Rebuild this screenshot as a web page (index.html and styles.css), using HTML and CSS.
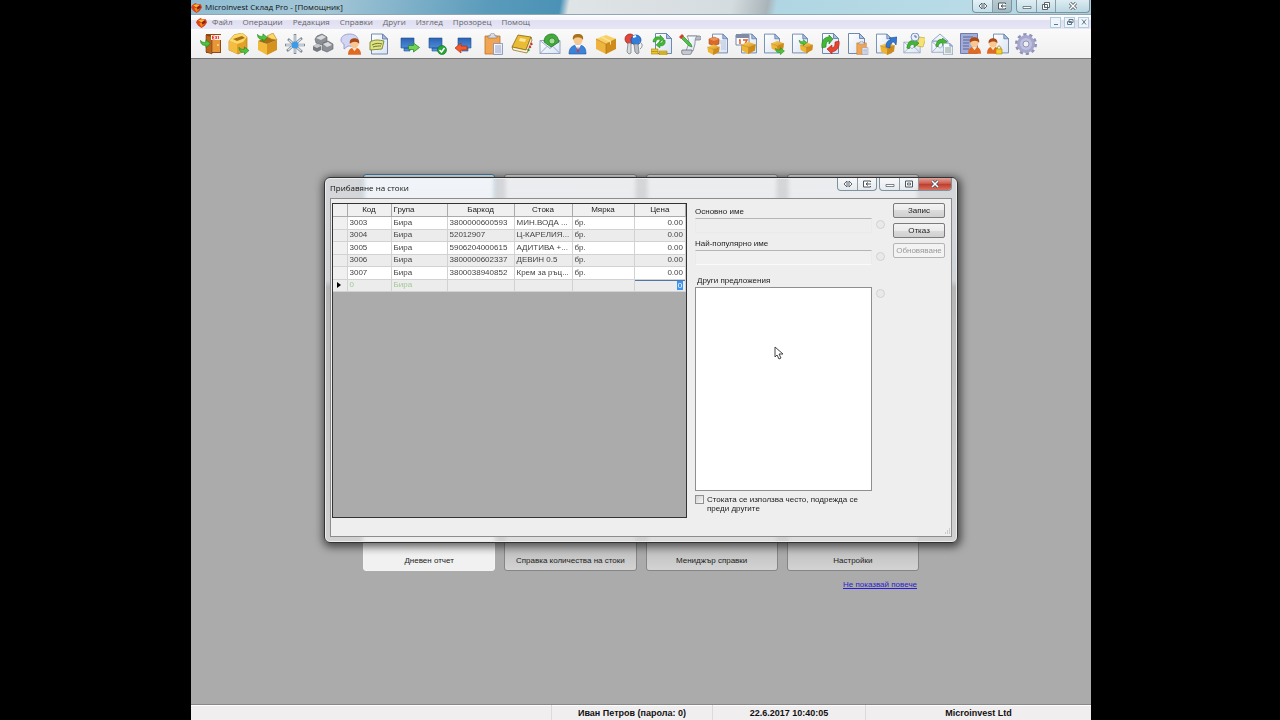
FILE: index.html
```
<!DOCTYPE html>
<html lang="bg">
<head>
    <meta charset="UTF-8">
    <meta name="viewport" content="width=device-width, initial-scale=1.0">
    <title>Microinvest Склад Pro - [Помощник]</title>
    <link rel="stylesheet" href="styles.css">
</head>
<body>

<!-- shared icon parts -->
<svg class="defs" aria-hidden="true">
    <defs>
        <linearGradient id="gold" x1="0" y1="0" x2="1" y2="1">
            <stop offset="0" stop-color="#fbd45f"/>
            <stop offset="1" stop-color="#d8961f"/>
        </linearGradient>
        <linearGradient id="paper" x1="0" y1="0" x2="1" y2="1">
            <stop offset="0" stop-color="#ffffff"/>
            <stop offset="1" stop-color="#d9e3f3"/>
        </linearGradient>
        <linearGradient id="screenBlue" x1="0" y1="0" x2="0" y2="1">
            <stop offset="0" stop-color="#2c62b4"/>
            <stop offset="1" stop-color="#5597e0"/>
        </linearGradient>
    </defs>
    <symbol id="logo" viewBox="0 0 10 10">
        <path d="M1 3l3-2 2 1 3 0 1 3-2 3-3 2-3-2-2-3z" fill="#d8431c"/>
        <path d="M2 3l3-1 3 1-3 2z" fill="#f9b52c"/>
        <path d="M3 6l2-1 3 1-3 3z" fill="#f08a1e"/>
        <path d="M5 5l3-2 1 2-3 2z" fill="#8e2410"/>
    </symbol>
    <symbol id="box" viewBox="0 0 20 18">
        <path d="M0 5l10 4v9L1 13z" fill="#f0b433"/>
        <path d="M10 9l10-4-1 8-9 5z" fill="#cf8b16"/>
        <path d="M0 5l10-4 10 4-10 4z" fill="url(#gold)"/>
        <path d="M0 5l10 4 10-4M10 9v9" fill="none" stroke="#a86d10" stroke-width=".6"/>
    </symbol>
    <symbol id="doc" viewBox="0 0 17 21">
        <path d="M.5.5h11l5 5v15H.5z" fill="url(#paper)" stroke="#7089ae"/>
        <path d="M11.500.5v5h5z" fill="#a9bfe0" stroke="#5b77a6" stroke-width=".8"/>
    </symbol>
    <symbol id="arrowRight" viewBox="0 0 12 10">
        <path d="M.5 3h5V.5L11.500 5 5.500 9.500V7h-5z" fill="#6fd457" stroke="#2d8a28" stroke-width=".8"/>
    </symbol>
    <symbol id="arrowCurve" viewBox="0 0 12 10">
        <path d="M.5 1.500C2 4 4 4 6.500 3.500V1l5 4-5 4.500V7C3 7.500.5 6 .5 1.500z" fill="#4cc43b" stroke="#238020" stroke-width=".7"/>
    </symbol>
    <symbol id="person" viewBox="0 0 14 18">
        <path d="M0 18c0-6 3-8 7-8s7 2 7 8z" fill="#e06a22"/>
        <path d="M4 10l3 4 3-4z" fill="#fbe3c2"/>
        <circle cx="7" cy="6" r="4.500" fill="#f7c893"/>
        <path d="M2 6C1 1 5 0 7 0s6 1 5 6C10 3 5 3 2 6z" fill="#a94a17"/>
    </symbol>
    <symbol id="mail" viewBox="0 0 22 15">
        <path d="M1 1l20 0v13H1z" fill="url(#paper)" stroke="#7f93b8" stroke-width=".8"/>
        <path d="M1 1l10 8 10-8M1 14l7-7M21 14l-7-7" fill="none" stroke="#8ea0c6" stroke-width=".9"/>
    </symbol>
    <symbol id="greenTurn" viewBox="0 0 16 12">
        <path d="M1 11C2 4 5 1 10 2l0-2 6 5-6 5V7C7 6 5 7 4 12z" fill="#44b534" stroke="#1f7c1c" stroke-width=".7"/>
    </symbol>
    <symbol id="clip" viewBox="0 0 20 22">
        <path d="M1 3h15v18H1z" fill="#f1a451" stroke="#be7427" stroke-width=".8"/>
        <path d="M4 5V3h2c0-4 5-4 5 0h2v2z" fill="#d9dce2" stroke="#777" stroke-width=".6"/>
        <path d="M9.500 10.500h9v11h-9z" fill="url(#paper)" stroke="#7d8bb0" stroke-width=".8"/>
        <path d="M11 13h6M11 15h6M11 17h6M11 19h6" stroke="#98a6cc"/>
    </symbol>
    <symbol id="dualArrow" viewBox="0 0 10 8">
        <path d="M4 1L1 4l3 3zM6 1l3 3-3 3z" fill="#fff" stroke="#4b555e" stroke-width=".9"/>
    </symbol>
    <symbol id="dock" viewBox="0 0 10 8">
        <path d="M8.500 2V1h-7v6h7V6" fill="#fff" stroke="#4b555e"/>
        <path d="M9 4H4M6 2.500L4 4l2 1.500" fill="none" stroke="#4b555e"/>
    </symbol>
    <symbol id="minimize" viewBox="0 0 10 8">
        <path d="M1 4.500h8v2H1z" fill="#fff" stroke="#5b6670" stroke-width=".8"/>
    </symbol>
    <symbol id="maximize" viewBox="0 0 10 8">
        <path d="M1.500 1h7v6h-7z" fill="#fff" stroke="#4b555e"/>
        <path d="M3.500 3h3v2h-3z" fill="#dde" stroke="#4b555e" stroke-width=".8"/>
    </symbol>
    <symbol id="restore" viewBox="0 0 10 8">
        <path d="M3.500.5h5v5h-5zM1.500 2.500h5v5h-5z" fill="#fff" stroke="#4b555e" stroke-width=".9"/>
        <path d="M3.500 4.500h1v1h-1z" fill="#4b555e"/>
    </symbol>
    <symbol id="close" viewBox="0 0 10 8">
        <path d="M2 1l6 6M8 1L2 7" stroke="#4b555e" stroke-width="3"/>
        <path d="M2 1l6 6M8 1L2 7" stroke="#fff" stroke-width="1.500"/>
    </symbol>
</svg>

<div class="app">
    <header class="titlebar">
        <svg class="logo"><use href="#logo"/></svg>
        <h1>Microinvest Склад Pro - [Помощник]</h1>
        <div class="window-buttons">
            <button aria-label="Преместване"><svg><use href="#dualArrow"/></svg></button>
            <button class="shade" aria-label="Закачане"><svg><use href="#dock"/></svg></button>
        </div>
        <div class="window-buttons">
            <button aria-label="Минимизиране"><svg><use href="#minimize"/></svg></button>
            <button aria-label="Възстановяване"><svg><use href="#restore"/></svg></button>
            <button class="wide" aria-label="Затваряне"><svg><use href="#close"/></svg></button>
        </div>
    </header>

    <nav class="menubar">
        <svg class="logo"><use href="#logo"/></svg>
        <button>Файл</button>
        <button>Операции</button>
        <button>Редакция</button>
        <button>Справки</button>
        <button>Други</button>
        <button>Изглед</button>
        <button>Прозорец</button>
        <button>Помощ</button>
        <div class="mdi-buttons">
            <button aria-label="Минимизиране"><svg viewBox="0 0 8 8"><path d="M2 6.500h4"/></svg></button>
            <button aria-label="Възстановяване"><svg viewBox="0 0 8 8"><path d="M3 1.500h4v3H3zM1.500 3.500h4v3h-4z"/></svg></button>
            <button aria-label="Затваряне"><svg viewBox="0 0 8 8"><path d="M2 1.500l4 5M6 1.500l-4 5"/></svg></button>
        </div>
    </nav>

    <div class="toolbar">
        <button aria-label="Изход"><svg viewBox="0 0 22 22">
            <path d="M6 1h15v19H6z" fill="#8c4a12"/>
            <path d="M7 3h13v16H7z" fill="#e8963a"/>
            <path d="M6 2l6 2v17l-6-2z" fill="#b9661c" stroke="#7b3e0d" stroke-width=".6"/>
            <path d="M11 2h10v5H11z" fill="#fff1e6"/>
            <path d="M12.500 3v3M12.500 3h2M12.500 4.500h1.500M12.500 6h2M15.500 3l1.500 3M17 3l-1.500 3M18.500 3v3" stroke="#d22" stroke-width=".8"/>
            <circle cx="18" cy="12" r="1" fill="#fbe08a"/>
            <use href="#arrowCurve" x="0" y="6" width="11" height="9"/>
        </svg></button>
        <button aria-label="Продажба"><svg viewBox="0 0 22 22">
            <path d="M1 8l5-6 8-2 5 4v13l-9 4-9-4z" fill="#e3a127" stroke="#a9700f" stroke-width=".6"/>
            <path d="M1 8l5-6 8-2 5 4-4 5-6 2z" fill="#fbd869"/>
            <path d="M5 6l9-3 3 2-8 3z" fill="#a86f11"/>
            <path d="M1 8l8 3v10l-8-4z" fill="#f5bd40"/>
            <use href="#arrowCurve" x="10" y="13" width="12" height="9"/>
        </svg></button>
        <button aria-label="Доставка"><svg viewBox="0 0 22 22">
            <path d="M2 8l9 3v11l-9-5z" fill="#f3b93b"/>
            <path d="M11 11l10-4v10l-10 5z" fill="#d5931e"/>
            <path d="M2 8l9-4 10 3-10 4z" fill="#a86f11"/>
            <path d="M11 3l6-3 4 7-6-1z" fill="#fbd869" stroke="#b57a14" stroke-width=".6"/>
            <use href="#arrowCurve" x="0" y="0" width="13" height="9"/>
        </svg></button>
        <button aria-label="Прехвърляне"><svg viewBox="0 0 22 22">
            <path d="M11 1v20M1 12h20M3 18L18 5M4 6l14 13" stroke="#7e8791" stroke-width="2.500"/>
            <path d="M11 2v18M2 12h18M4 17L17 6M5 7l12 11" stroke="#d9e0e7" stroke-width="1.300"/>
            <circle cx="11" cy="12" r="3.500" fill="#3b9be8"/>
        </svg></button>
        <button aria-label="Производство"><svg viewBox="0 0 22 22">
            <path d="M3 6l2-3 5-2 5 3v5l-5 3-6-2z" fill="#8c9096" stroke="#5b5f65" stroke-width=".6"/>
            <path d="M4 5l6-3 4 2-5 3z" fill="#d8dadd"/>
            <path d="M10 14l1-4 5-2 5 3v5l-6 3-5-2z" fill="#8c9096" stroke="#5b5f65" stroke-width=".6"/>
            <path d="M11 11l5-2 4 3-5 2z" fill="#d8dadd"/>
            <path d="M1 13l4-2 4 2v4l-4 2-4-2z" fill="#777b81"/>
            <path d="M1 13l4-2 4 2-4 2z" fill="#c8cacd"/>
        </svg></button>
        <button aria-label="Чат"><svg viewBox="0 0 22 22">
            <path d="M1 7c0-8 17-8 17 0s-7 6-10 6l-4 3V11C2 10 1 9 1 7z" fill="#d2d6f2" stroke="#8c93c9" stroke-width=".8"/>
            <use href="#person" x="8" y="5" width="13" height="17"/>
        </svg></button>
        <button aria-label="Бележка"><svg viewBox="0 0 22 22">
            <use href="#doc" x="3" y="0" width="17" height="22"/>
            <path d="M2 9c5-3 9-2 14-1l-2 8-12 1z" fill="#dfe384" stroke="#79832b" stroke-width=".9"/>
            <path d="M4 12c4-2 7-2 10-1M5 14c3-1 6-1 8-1" fill="none" stroke="#6d7630"/>
        </svg></button>
        <span class="separator"></span>
        <button aria-label="Напред"><svg viewBox="0 0 22 22">
            <path d="M2 5h13v10H2zM5 15h6v3H5z" fill="url(#screenBlue)" stroke="#204d92" stroke-width=".6"/>
            <use href="#arrowRight" x="9" y="9" width="12" height="11"/>
        </svg></button>
        <button aria-label="Потвърди"><svg viewBox="0 0 22 22">
            <path d="M2 5h13v10H2zM5 15h6v3H5z" fill="url(#screenBlue)" stroke="#204d92" stroke-width=".6"/>
            <circle cx="15" cy="17" r="4.500" fill="#27a53a" stroke="#0b6d1c" stroke-width=".6"/>
            <path d="M12.500 17l2 2 3-4" fill="none" stroke="#fff" stroke-width="1.500"/>
        </svg></button>
        <button aria-label="Назад"><svg viewBox="0 0 22 22">
            <path d="M3 5h13v10H3zM7 15h6v3H7z" fill="url(#screenBlue)" stroke="#204d92" stroke-width=".6"/>
            <path d="M0 15l6-5v3h6v4H6v3z" fill="#f05b30" stroke="#ad2f10" stroke-width=".7"/>
        </svg></button>
        <button aria-label="Постави"><svg viewBox="0 0 22 22">
            <use href="#clip" x="1" y="0" width="20" height="22"/>
        </svg></button>
        <button aria-label="Книга"><svg viewBox="0 0 22 22">
            <path d="M1 14L7 2l13 2-5 13z" fill="#eabc35" stroke="#8a6410" stroke-width=".8"/>
            <path d="M1 14l14 3 5-13 1 3-5 13L2 17z" fill="#faf3d8" stroke="#8a6410" stroke-width=".7"/>
            <path d="M9 5l6 1-1 3-6-1z" fill="#fbe79d"/>
            <path d="M20 10l1 2M18.500 13l1 2" stroke="#c33" stroke-width="2"/>
            <path d="M17 16l1 2" stroke="#2a9b35" stroke-width="2"/>
        </svg></button>
        <button aria-label="Плащане"><svg viewBox="0 0 22 22">
            <use href="#mail" x="0" y="6" width="22" height="16"/>
            <path d="M5 9c0-6 4-8 8-8s6 3 7 8l-8 5z" fill="#43ab3c" stroke="#1d6f20" stroke-width=".7"/>
            <circle cx="13" cy="8" r="3" fill="#a3dc93" stroke="#1d6f20" stroke-width=".6"/>
        </svg></button>
        <button aria-label="Партньор"><svg viewBox="0 0 22 22">
            <path d="M2 21c0-6 3-9 9-9s8 3 8 9z" fill="#3b83d8" stroke="#1e56a2" stroke-width=".6"/>
            <path d="M8 12l3 5 3-5z" fill="#fff"/>
            <path d="M11 13l1 5-1 2-1-2z" fill="#d33"/>
            <circle cx="11" cy="7" r="4.500" fill="#f7c88f"/>
            <path d="M6 7C5 2 8 1 11 1s6 1 5 6c-2-3-7-4-10 0z" fill="#a8721d"/>
        </svg></button>
        <button aria-label="Стока"><svg viewBox="0 0 22 22">
            <path d="M1 6l10 5v10L1 16z" fill="#eeb43d"/>
            <path d="M11 11l10-5v10l-10 5z" fill="#cf8c1b"/>
            <path d="M1 6l10-4 10 4-10 5z" fill="#f9cf62"/>
            <path d="M1 6l10 5 10-5M11 11v10" fill="none" stroke="#a86d10" stroke-width=".6"/>
            <path d="M5 4l10 5v3l1-1V8L7 3z" fill="#fbe09a"/>
        </svg></button>
        <button aria-label="Потребители"><svg viewBox="0 0 22 22">
            <circle cx="7" cy="6" r="5" fill="#e2463a" stroke="#9b1f18" stroke-width=".7"/>
            <circle cx="13" cy="7" r="5" fill="#2f7ddd" stroke="#194e98" stroke-width=".7"/>
            <path d="M10 4l3-1" stroke="#fff" stroke-width="2"/>
            <path d="M5 10l3 0 0 10-2 1-2-2z" fill="#d8dce0" stroke="#6c7278" stroke-width=".7"/>
            <path d="M11 11h4l1 9-2 1-2-2z" fill="#b9bfc5" stroke="#6c7278" stroke-width=".7"/>
            <path d="M16 9c4 1 4 5 1 7" fill="none" stroke="#8b8f94"/>
        </svg></button>
        <button aria-label="Валути"><svg viewBox="0 0 22 22">
            <use href="#doc" x="4" y="0" width="17" height="21"/>
            <path d="M2 9c0-4 3-6 7-5V2l4 4-4 3V7C7 6 5 7 5 9zM14 7c1 4-1 6-5 6v2l-4-3 4-4v2c2 0 3-1 3-3z" fill="#42b836" stroke="#1f7c1c" stroke-width=".4"/>
            <path d="M0 16h7v5H0zM8 18h8v4H8z" fill="#ecc52e" stroke="#a27f12" stroke-width=".6"/>
            <path d="M0 18.500h7M8 20h8" stroke="#a27f12" stroke-width=".6"/>
        </svg></button>
        <button aria-label="Редактиране"><svg viewBox="0 0 22 22">
            <path d="M9 3h11c3 0 3 4 0 4h-4z" fill="#b7bbc6" stroke="#7d828c" stroke-width=".8"/>
            <path d="M8 3h10c-2 2-2 5-2 8l-2 7H7l3-8C10 7 9 5 8 3z" fill="url(#paper)" stroke="#7d828c" stroke-width=".8"/>
            <path d="M3 17h10c0 4-2 5-4 5H5c-2 0-3-3-2-5z" fill="#c5c9d3" stroke="#6a707b" stroke-width=".8"/>
            <path d="M3 2l9 9 1 3-3-1L1 4z" fill="#53c04a" stroke="#237c25" stroke-width=".6"/>
            <path d="M3 1l2 2-3 3-2-2z" fill="#dd3b31"/>
        </svg></button>
        <button aria-label="Справка стоки"><svg viewBox="0 0 22 22">
            <use href="#doc" x="5" y="0" width="16" height="21"/>
            <path d="M12 8h7M13 10h6M14 12h5M14 14h5M14 16h5" stroke="#b4c1d8"/>
            <path d="M2 6l5-2 5 2v5l-5 2-5-2z" fill="#d9692c" stroke="#9c4215" stroke-width=".5"/>
            <path d="M2 6l5-2 5 2-5 2z" fill="#ee9351"/>
            <use href="#box" x="0" y="11" width="13" height="11"/>
        </svg></button>
        <button aria-label="Календар"><svg viewBox="0 0 22 22">
            <use href="#doc" x="6" y="0" width="16" height="21"/>
            <path d="M1 2h13v10H1z" fill="#fff" stroke="#7387ab"/>
            <path d="M1 1h13v4H1z" fill="#7f8ca5"/>
            <path d="M4 7h1v4M8 7h4l-2 4" fill="none" stroke="#df592b" stroke-width="1.500"/>
            <use href="#box" x="6" y="8" width="15" height="13"/>
        </svg></button>
        <button aria-label="Изписване"><svg viewBox="0 0 22 22">
            <use href="#doc" x="1" y="0" width="16" height="21"/>
            <use href="#box" x="8" y="7" width="13" height="12"/>
            <use href="#arrowCurve" x="12" y="14" width="10" height="8"/>
        </svg></button>
        <button aria-label="Приемане"><svg viewBox="0 0 22 22">
            <use href="#doc" x="1" y="0" width="16" height="21"/>
            <use href="#box" x="9" y="8" width="13" height="13"/>
            <use href="#arrowCurve" x="7" y="6" width="10" height="7"/>
        </svg></button>
        <button aria-label="Обмяна"><svg viewBox="0 0 22 22">
            <use href="#doc" x="3" y="0" width="17" height="21"/>
            <path d="M3 15C2 8 5 4 10 4V2l4 4-4 5V8c-2 0-3 2-3 6z" fill="#42b836" stroke="#1f7c1c" stroke-width=".6"/>
            <path d="M20 8c1 6-2 10-7 11v2l-5-5 5-4v3c3-1 3-3 3-6z" fill="#e8432f" stroke="#a5200f" stroke-width=".6"/>
        </svg></button>
        <button aria-label="Копиране"><svg viewBox="0 0 22 22">
            <use href="#doc" x="1" y="0" width="17" height="21"/>
            <use href="#clip" x="9" y="8" width="13" height="14"/>
        </svg></button>
        <button aria-label="Експорт"><svg viewBox="0 0 22 22">
            <use href="#doc" x="1" y="0" width="16" height="21"/>
            <use href="#box" x="5" y="9" width="15" height="13"/>
            <path d="M11 14c0-5 2-7 5-7l-2-2 8-1-1 8-2-3c-3 0-4 2-4 6z" fill="#3479cf" stroke="#1b4c95" stroke-width=".6"/>
        </svg></button>
        <button aria-label="Поща с час"><svg viewBox="0 0 22 22">
            <use href="#mail" x="0" y="8" width="18" height="13"/>
            <path d="M16 4l7 1-3 9-6-1z" fill="#f5e275" stroke="#bfa12e" stroke-width=".6"/>
            <use href="#greenTurn" x="3" y="6" width="13" height="10"/>
            <circle cx="12" cy="4" r="4" fill="#e5eefc" stroke="#7c92c1"/>
            <path d="M12 2v2h2" fill="none" stroke="#53699b"/>
        </svg></button>
        <button aria-label="Поща"><svg viewBox="0 0 22 22">
            <path d="M1 8l8-7 8 7z" fill="#eef2fb" stroke="#7f93b8" stroke-width=".8"/>
            <use href="#mail" x="0" y="7" width="18" height="14"/>
            <use href="#greenTurn" x="3" y="5" width="14" height="9"/>
            <use href="#doc" x="12" y="10" width="10" height="12"/>
            <path d="M14 15h6M14 17h6M14 19h6" stroke="#8fa78f"/>
        </svg></button>
        <button aria-label="Отчет по потребител"><svg viewBox="0 0 22 22">
            <path d="M1.500.5h17v20h-17z" fill="#a4add6" stroke="#6f7aae"/>
            <path d="M4 4h10M4 7h8M4 10h6M4 13h6M4 16h6" stroke="#59659d"/>
            <use href="#person" x="9" y="4" width="13" height="17"/>
        </svg></button>
        <button aria-label="Права"><svg viewBox="0 0 22 22">
            <use href="#doc" x="6" y="0" width="16" height="21"/>
            <use href="#person" x="0" y="5" width="12" height="16"/>
            <path d="M9 16h6v5H9z" fill="#f5ce2c" stroke="#b08c12" stroke-width=".7"/>
            <path d="M10 16c0-4 4-4 4 0" fill="none" stroke="#b08c12"/>
        </svg></button>
        <button aria-label="Настройки"><svg viewBox="0 0 22 22">
            <circle cx="11" cy="11" r="9" fill="none" stroke="#8f91b8" stroke-width="4" stroke-dasharray="3 2.655"/>
            <circle cx="11" cy="11" r="9" fill="#a5a7cc"/>
            <circle cx="11" cy="11" r="6" fill="#bfc1df"/>
            <circle cx="11" cy="11" r="3" fill="#f0f0f0" stroke="#7d80ac" stroke-width=".8"/>
        </svg></button>
    </div>

    <main class="workspace">
        <div class="helper">
            <div class="tiles">
                <span class="tile active"></span>
                <span class="tile"></span>
                <span class="tile"></span>
                <span class="tile"></span>
                <button class="tile selected">Дневен отчет</button>
                <button class="tile">Справка количества на стоки</button>
                <button class="tile">Мениджър справки</button>
                <button class="tile">Настройки</button>
            </div>
            <a class="hide-link" href="#">Не показвай повече</a>
        </div>

        <section class="dialog" role="dialog" aria-labelledby="dialog-title">
            <header class="dialog-title">
                <h2 id="dialog-title">Прибавяне на стоки</h2>
                <div class="window-buttons">
                    <button aria-label="Преместване"><svg><use href="#dualArrow"/></svg></button>
                    <button aria-label="Закачане"><svg><use href="#dock"/></svg></button>
                </div>
                <div class="window-buttons">
                    <button aria-label="Минимизиране"><svg><use href="#minimize"/></svg></button>
                    <button aria-label="Максимизиране"><svg><use href="#maximize"/></svg></button>
                    <button class="wide red" aria-label="Затваряне"><svg><use href="#close"/></svg></button>
                </div>
            </header>

            <form class="dialog-body">
                <div class="grid-box">
                    <table>
                        <colgroup>
                            <col class="c-mark"><col class="c-code"><col class="c-group"><col class="c-barcode"><col class="c-item"><col class="c-unit"><col class="c-price">
                        </colgroup>
                        <thead>
                            <tr><th></th><th>Код</th><th class="left">Група</th><th>Баркод</th><th>Стока</th><th>Мярка</th><th>Цена</th></tr>
                        </thead>
                        <tbody>
                            <tr><th></th><td>3003</td><td>Бира</td><td>3800000600593</td><td>МИН.ВОДА ...</td><td>бр.</td><td class="num">0.00</td></tr>
                            <tr><th></th><td>3004</td><td>Бира</td><td>52012907</td><td>Ц-КАРЕЛИЯ...</td><td>бр.</td><td class="num">0.00</td></tr>
                            <tr><th></th><td>3005</td><td>Бира</td><td>5906204000615</td><td>АДИТИВА +...</td><td>бр.</td><td class="num">0.00</td></tr>
                            <tr><th></th><td>3006</td><td>Бира</td><td>3800000602337</td><td>ДЕВИН 0.5</td><td>бр.</td><td class="num">0.00</td></tr>
                            <tr><th></th><td>3007</td><td>Бира</td><td>3800038940852</td><td>Крем за ръц...</td><td>бр.</td><td class="num">0.00</td></tr>
                            <tr class="new"><th><svg class="marker" viewBox="0 0 4 6"><path d="M0 0l4 3-4 3z"/></svg></th><td>0</td><td>Бира</td><td></td><td></td><td></td><td class="num edit"><input value="0" aria-label="Цена"></td></tr>
                        </tbody>
                    </table>
                </div>

                <div class="names">
                    <div class="field">
                        <label for="main-name">Основно име</label>
                        <input type="text" id="main-name" class="line" readonly>
                        <input type="radio" name="pick" aria-label="Основно име" disabled>
                    </div>
                    <div class="field">
                        <label for="popular-name">Най-популярно име</label>
                        <input type="text" id="popular-name" class="line pale" readonly>
                        <input type="radio" name="pick" aria-label="Най-популярно име" disabled>
                    </div>
                    <div class="field grow">
                        <label for="others">Други предложения</label>
                        <textarea id="others" readonly></textarea>
                        <input type="radio" name="pick" aria-label="Други предложения" disabled>
                    </div>
                    <label class="often"><input type="checkbox">Стоката се използва често, подрежда се преди другите</label>
                </div>

                <div class="actions">
                    <button type="button">Запис</button>
                    <button type="button">Отказ</button>
                    <button type="button" disabled>Обновяване</button>
                </div>
                <svg class="grip" viewBox="0 0 8 8"><path d="M6 1h1M4 3h1M6 3h1M2 5h1M4 5h1M6 5h1"/></svg>
            </form>

            <svg class="cursor" viewBox="0 0 10 14"><path d="M1 1v10l2-2 2 4 2-1-2-4h4z"/></svg>
        </section>
    </main>

    <footer class="statusbar">
        <span></span>
        <span>Иван Петров (парола: 0)</span>
        <span>22.6.2017 10:40:05</span>
        <span>Microinvest Ltd</span>
    </footer>
</div>

</body>
</html>
```
FILE: styles.css
```
* {
    box-sizing: border-box;
}
body {
    margin: 0;
    padding: 0 189px 0 191px;
    background-color: #000;
    font-family: "Liberation Sans", Arial, sans-serif;
    font-size: 8px;
    line-height: 10px;
    color: #222;
}
button, input, textarea {
    font: inherit;
    color: inherit;
    margin: 0;
}
button {
    padding: 0;
    border: none;
    background: none;
}
h1, h2 {
    margin: 0;
    font-weight: normal;
}
.defs {
    position: absolute;
    width: 0;
    height: 0;
}
.app {
    display: flex;
    flex-direction: column;
    min-height: 100vh;
    background-color: #ababab;
}
.logo {
    width: 11px;
    height: 11px;
}

/* title bar */
.titlebar {
    display: flex;
    align-items: flex-start;
    gap: 4px;
    height: 15px;
    padding-right: 1px;
    background: linear-gradient(100deg, #8fbdd3 0, #a5c7d7 15%, #5a9bbb 33%, #4b92b6 41%, #dfe4e6 42%, #d5dcdf 60%, #a9b4ba 64%, #b0d6e3 65%, #b9dce7 88%, #a7cddb 100%);
    border-bottom: 1px solid #8ea6b5;
}
.titlebar .logo {
    margin-top: 2px;
}
.titlebar h1 {
    flex: 1;
    margin-left: -1px;
    font-family: "Open Sans", "Noto Sans", sans-serif;
    font-size: 8px;
    line-height: 14px;
    color: #111;
}
.window-buttons {
    display: flex;
    border: 1px solid #7e929e;
    border-top: none;
    border-radius: 0 0 4px 4px;
    background: linear-gradient(rgba(255, 255, 255, .6), rgba(220, 230, 236, .3));
    overflow: hidden;
}
.window-buttons button {
    display: flex;
    justify-content: center;
    align-items: center;
    width: 19px;
    height: 12px;
}
.window-buttons button + button {
    border-left: 1px solid #8b9ca6;
}
.window-buttons .wide {
    width: 34px;
}
.window-buttons .shade {
    background-color: rgba(90, 110, 120, .3);
}
.window-buttons .red {
    width: 33px;
    background: linear-gradient(#dda49b, #cf5f50 45%, #bf3a2c 50%, #d8705e);
}
.window-buttons svg {
    width: 10px;
    height: 8px;
}

/* menu */
.menubar {
    display: flex;
    align-items: center;
    gap: 10px;
    height: 14px;
    padding: 0 2px 0 5px;
    background: linear-gradient(#fff, #f4f4fc 35%, #dfdff2 40%, #e6e6f6);
    font-family: "Open Sans", "Noto Sans", sans-serif;
    color: #666;
}
.menubar .logo {
    margin-right: -5px;
}
.mdi-buttons {
    display: flex;
    gap: 3px;
    margin-left: auto;
}
.mdi-buttons button {
    display: flex;
    justify-content: center;
    align-items: center;
    width: 11px;
    height: 11px;
    border: 1px solid #b4cbdb;
    background-color: #eef5fb;
}
.mdi-buttons svg {
    width: 8px;
    height: 8px;
    fill: none;
    stroke: #62788a;
}

/* toolbar */
.toolbar {
    display: flex;
    align-items: center;
    height: 30px;
    padding-left: 6px;
    background: linear-gradient(#fafafa, #efeff0);
    border-bottom: 1px solid #777;
}
.toolbar button {
    flex: none;
    width: 28px;
    height: 24px;
}
.toolbar svg {
    display: block;
    width: 22px;
    height: 22px;
    margin: 0 auto;
}
.separator {
    flex: none;
    width: 3px;
}

/* helper screen behind the dialog */
.workspace {
    position: relative;
    flex: 1;
}
.helper {
    display: flex;
    flex-direction: column;
    margin: 115px 172px 0;
}
.tiles {
    display: grid;
    grid-template-columns: repeat(4, 1fr);
    grid-template-rows: 193px 193px;
    gap: 11px 9px;
}
.tile {
    padding-bottom: 4px;
    display: flex;
    justify-content: center;
    align-items: flex-end;
    border: 1px solid #858585;
    border-radius: 3px;
    background: linear-gradient(#e4e4e4 60%, #c2c2c2 90%, #d3d3d3);
}
.tile.active {
    border-color: #3f83aa;
    background: #f2f8fb;
}
.tile.selected {
    border-color: #f4f4f4;
    background: #f1f1f1;
}
.hide-link {
    align-self: flex-end;
    margin: 9px 2px 0 0;
    color: #2a1fd0;
}

/* dialog */
.dialog {
    position: absolute;
    top: 118px;
    left: 133px;
    right: 133px;
    padding: 0 5px 5px;
    border: 1px solid #333;
    border-radius: 6px;
    background: linear-gradient(rgba(240, 243, 247, .6), rgba(225, 229, 234, .7) 28%, rgba(190, 190, 190, .6) 30%, rgba(235, 235, 235, .6));
    backdrop-filter: blur(2px);
    box-shadow: inset 0 0 0 1px #e9edf0, 1px 2px 9px 2px rgba(0, 0, 0, .6);
}
.dialog-title {
    display: flex;
    align-items: flex-start;
    gap: 2px;
    height: 20px;
}
.dialog-title h2 {
    flex: 1;
    font-family: "Open Sans", "Noto Sans", sans-serif;
    font-size: 8px;
    line-height: 19px;
    color: #111;
}
.dialog-body {
    position: relative;
    display: flex;
    height: 339px;
    padding: 4px 6px 18px 1px;
    border: 1px solid #8c8c8c;
    background-color: #eee;
}
.grid-box {
    flex: 1;
    border: 1px solid #333;
    background-color: #ababab;
}
table {
    width: 100%;
    table-layout: fixed;
    border-collapse: collapse;
}
.c-mark { width: 14px; }
.c-code { width: 44px; }
.c-group { width: 56px; }
.c-barcode { width: 67px; }
.c-item { width: 58px; }
.c-unit { width: 62px; }
th, td {
    height: 13px;
    padding: 0 2px;
    border: 1px solid #d2d2d2;
    border-width: 0 1px 1px 0;
    line-height: 10px;
    font-weight: normal;
    text-align: left;
    white-space: nowrap;
    overflow: hidden;
}
td {
    background-color: #fff;
    color: #444;
}
th {
    background-color: #f0f0f0;
}
thead th {
    height: 12px;
    text-align: center;
    border-color: #aaa;
}
thead .left {
    text-align: left;
}
tbody tr:nth-child(even) th,
tbody tr:nth-child(even) td {
    height: 12px;
    background-color: #ececec;
}
.num {
    text-align: right;
}
.new td:nth-child(-n+3) {
    color: #a3c795;
}
.marker {
    display: block;
    width: 4px;
    height: 6px;
    margin-left: 2px;
    fill: #000;
}
tbody .edit {
    box-shadow: inset 0 1px #4f78a8;
}
.edit input {
    display: block;
    width: 6px;
    height: 9px;
    margin-left: auto;
    padding: 0;
    border: none;
    background-color: #3b94f0;
    color: #fff;
    line-height: 9px;
    text-align: center;
}

/* right side of the dialog */
.names {
    display: flex;
    flex-direction: column;
    width: 199px;
    padding: 4px 0 0 8px;
}
.field {
    display: grid;
    grid-template-columns: 1fr 10px;
    grid-template-rows: 10px auto;
    align-items: start;
    gap: 1px 4px;
    margin-bottom: 6px;
}
.field label {
    grid-column: 1 / 3;
}
.line {
    width: 100%;
    height: 15px;
    padding: 0 2px;
    border: 1px solid #eaeaea;
    border-top-color: #b5b5b5;
    background-color: #eee;
}
.line.pale {
    border-bottom-color: #fafafa;
    background-color: #f0f0f0;
}
input[type="radio"] {
    appearance: none;
    align-self: start;
    width: 9px;
    height: 9px;
    margin-top: 2px;
    border: 1px solid #d2d2d2;
    border-radius: 50%;
    background-color: #e9e9e9;
}
.grow {
    flex: 1;
    grid-template-rows: 10px 1fr;
    margin: 5px 0 4px;
}
.grow label {
    padding-left: 2px;
}
textarea {
    width: 100%;
    height: 100%;
    border: 1px solid #8f8f8f;
    background-color: #fff;
    resize: none;
}
.often {
    display: flex;
    gap: 3px;
    width: 172px;
    line-height: 9px;
    margin-bottom: 5px;
}
.often input {
    appearance: none;
    flex: none;
    width: 9px;
    height: 9px;
    border: 1px solid #8e8f8f;
    background: linear-gradient(135deg, #cfcfcf, #f8f8f8);
}
.actions {
    display: flex;
    flex-direction: column;
    gap: 5px;
    width: 59px;
    padding: 0 0 0 7px;
}
.actions button {
    height: 15px;
    border: 1px solid #7b7b7b;
    border-radius: 2px;
    background: linear-gradient(#f3f3f3, #ebebeb 50%, #dbdbdb 50%, #d0d0d0);
}
.actions button:disabled {
    border-color: #b5b5b5;
    background: #f3f3f3;
    color: #999;
}
.grip {
    position: absolute;
    right: 0;
    bottom: 0;
    width: 8px;
    height: 8px;
    stroke: #aaa;
}
.cursor {
    position: absolute;
    top: 168px;
    left: 449px;
    width: 10px;
    height: 14px;
    fill: #fff;
    stroke: #444;
}

/* status bar */
.statusbar {
    display: grid;
    grid-template-columns: 360fr 161fr 153fr 226fr;
    height: 16px;
    border-top: 1px solid #888;
    background-color: #f1eef0;
    box-shadow: inset 0 1px #fff;
    font-size: 9px;
    font-weight: bold;
    line-height: 17px;
    text-align: center;
    color: #111;
}
.statusbar span + span {
    border-left: 1px solid #dcdadc;
}
```
